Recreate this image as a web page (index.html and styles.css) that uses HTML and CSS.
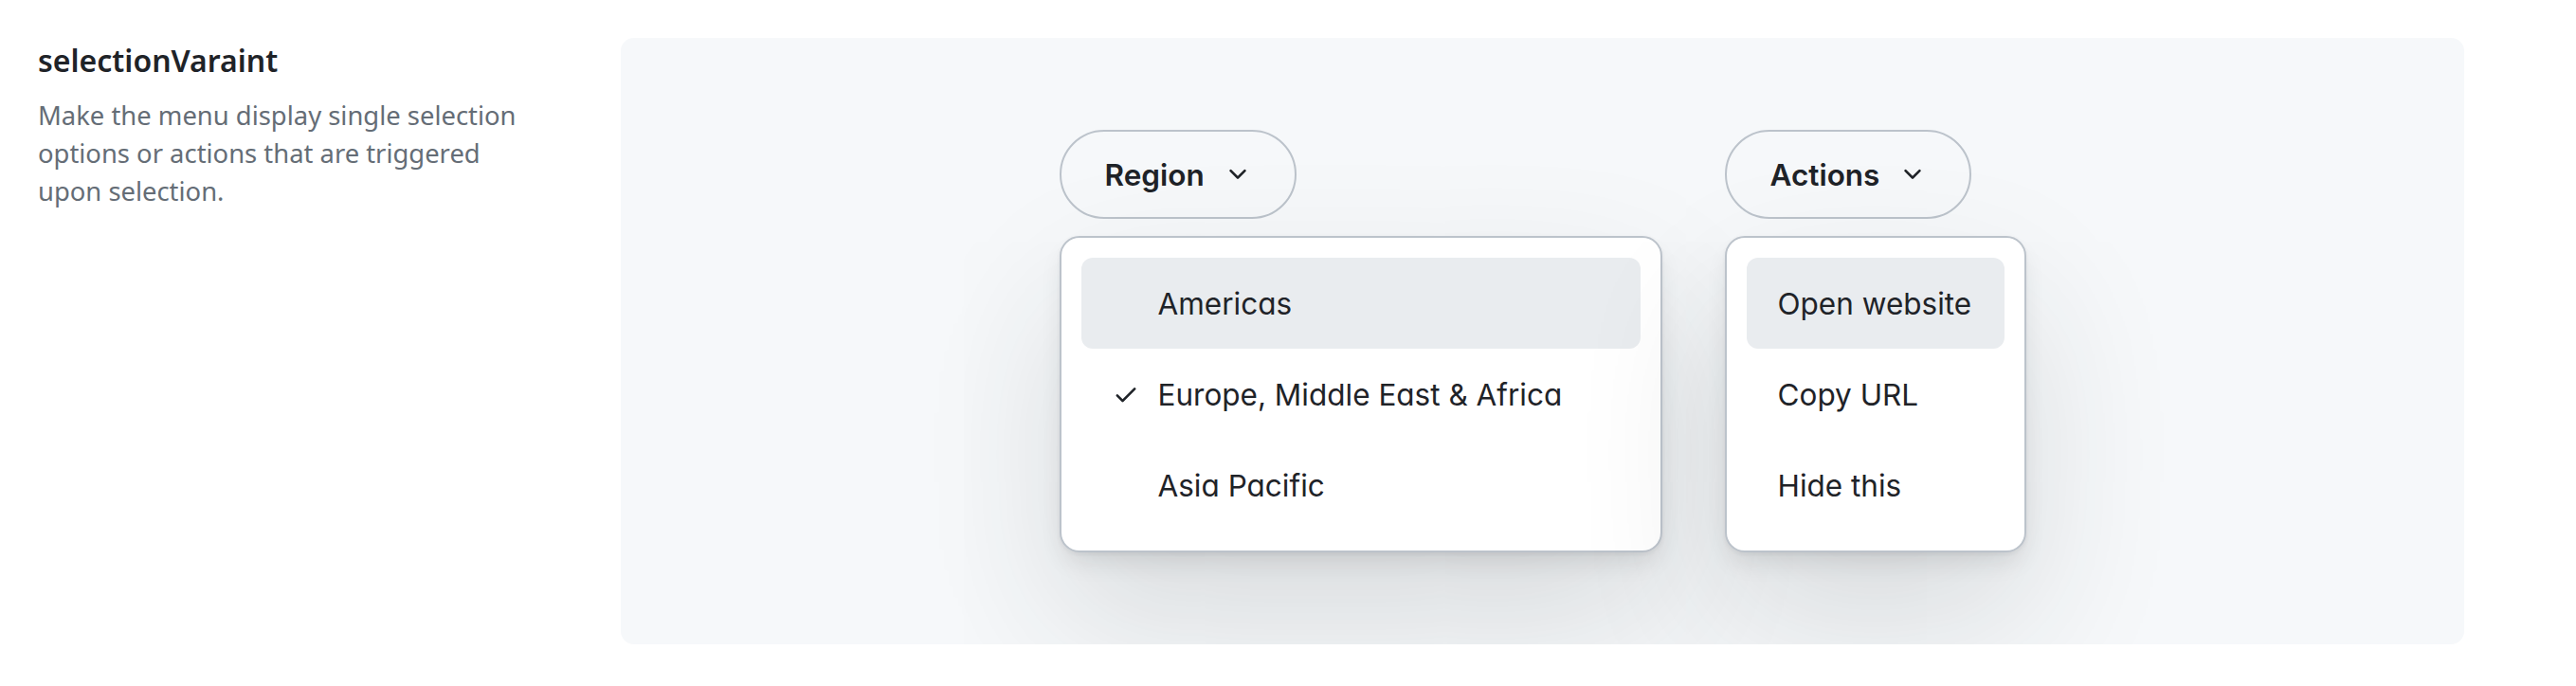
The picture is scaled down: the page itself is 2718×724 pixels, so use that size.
FILE: index.html
```html
<!DOCTYPE html>
<html lang="en">
<head>
<meta charset="utf-8">
<title>selectionVaraint</title>
<link rel="stylesheet" href="styles.css">
</head>
<body>
<div class="page">
  <aside class="intro">
    <h2 class="intro-title">selectionVaraint</h2>
    <p class="intro-text">Make the menu display single selection options or actions that are triggered upon selection.</p>
  </aside>
  <section class="stage">
    <div class="menu-group">
      <button class="trigger" type="button">
        <span>Region</span>
        <svg class="trigger-icon" viewBox="0 0 16 16" aria-hidden="true"><path d="M12.78 5.22a.749.749 0 0 1 0 1.06l-4.25 4.25a.749.749 0 0 1-1.06 0L3.22 6.28a.749.749 0 1 1 1.06-1.06L8 8.939l3.72-3.719a.749.749 0 0 1 1.06 0Z"/></svg>
      </button>
      <ul class="menu menu--region">
        <li class="menu-item is-active"><span class="menu-check"></span><span>Americas</span></li>
        <li class="menu-item"><span class="menu-check"><svg viewBox="0 0 16 16" aria-hidden="true"><path d="M13.78 4.22a.75.75 0 0 1 0 1.06l-7.25 7.25a.75.75 0 0 1-1.06 0L2.22 9.28a.751.751 0 0 1 .018-1.042.751.751 0 0 1 1.042-.018L6 10.94l6.72-6.72a.75.75 0 0 1 1.06 0Z"/></svg></span><span>Europe, Middle East &amp; Africa</span></li>
        <li class="menu-item"><span class="menu-check"></span><span>Asia Pacific</span></li>
      </ul>
    </div>
    <div class="menu-group">
      <button class="trigger" type="button">
        <span>Actions</span>
        <svg class="trigger-icon" viewBox="0 0 16 16" aria-hidden="true"><path d="M12.78 5.22a.749.749 0 0 1 0 1.06l-4.25 4.25a.749.749 0 0 1-1.06 0L3.22 6.28a.749.749 0 1 1 1.06-1.06L8 8.939l3.72-3.719a.749.749 0 0 1 1.06 0Z"/></svg>
      </button>
      <ul class="menu menu--actions">
        <li class="menu-item is-active"><span>Open website</span></li>
        <li class="menu-item"><span>Copy URL</span></li>
        <li class="menu-item"><span>Hide this</span></li>
      </ul>
    </div>
  </section>
</div>
</body>
</html>
```

FILE: styles.css
```css
* {
  box-sizing: border-box;
}

html, body {
  margin: 0;
  background: #ffffff;
}

body {
  font-family: Inter, "Noto Sans", "Liberation Sans", sans-serif;
  color: #1f2328;
}

.page {
  display: grid;
  grid-template-columns: 530px 1945px;
  column-gap: 85px;
  padding: 40px 0 0 40px;
}

.intro {
  font-family: "Noto Sans", "Liberation Sans", sans-serif;
}

.intro-title {
  margin: 2px 0 0;
  font-size: 32px;
  line-height: 44px;
  font-weight: 600;
  color: #1f2328;
}

.intro-text {
  margin: 16px 0 0;
  font-size: 27.4px;
  line-height: 40px;
  color: #656d76;
}

.stage {
  height: 640px;
  background: #f6f8fa;
  border-radius: 14px;
  display: flex;
  justify-content: center;
  align-items: center;
  gap: 66px;
}

.menu-group {
  display: flex;
  flex-direction: column;
  align-items: flex-start;
  gap: 18px;
}

.trigger {
  height: 94px;
  padding: 0 46px;
  border: 2px solid #bcc3cb;
  border-radius: 47px;
  background: transparent;
  display: flex;
  align-items: center;
  gap: 21px;
  font-family: Inter, "Noto Sans", sans-serif;
  font-size: 31.5px;
  font-weight: 600;
  color: #1f2328;
}

.trigger-icon {
  width: 28px;
  height: 28px;
  fill: #1f2328;
}

.menu {
  margin: 0;
  padding: 21px;
  list-style: none;
  background: #ffffff;
  border: 2px solid #bcc3cb;
  border-radius: 21px;
  box-shadow:
    0 2px 4px rgba(37, 41, 46, 0.06),
    0 14px 28px -8px rgba(37, 41, 46, 0.14),
    0 70px 160px rgba(37, 41, 46, 0.14);
}

.menu--region {
  width: 636px;
  font-feature-settings: "cv11";
}

.menu--actions {
  width: 318px;
}

.menu-item {
  height: 96px;
  display: flex;
  align-items: center;
  gap: 20px;
  padding: 0 33px;
  border-radius: 12px;
  font-size: 31.5px;
  font-weight: 400;
  color: #1f2328;
  white-space: nowrap;
}

.menu-item.is-active {
  background: #e9ecef;
}

.menu-check {
  width: 28px;
  height: 28px;
  flex: none;
  display: flex;
}

.menu-check svg {
  width: 28px;
  height: 28px;
  fill: #1f2328;
}
```
